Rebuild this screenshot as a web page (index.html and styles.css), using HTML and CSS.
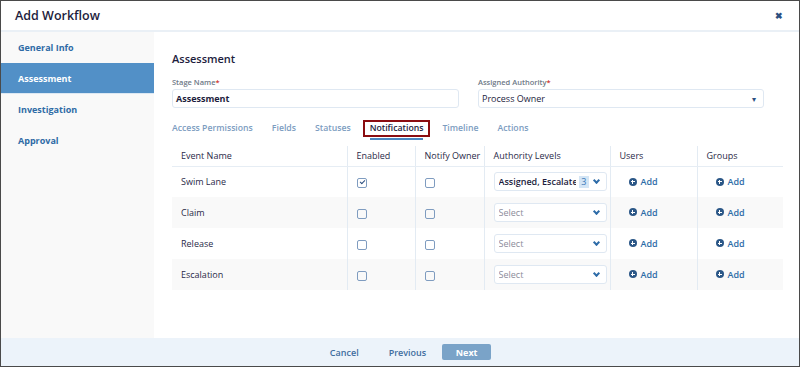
FILE: index.html
```html
<!DOCTYPE html>
<html lang="en">
<head>
    <meta charset="UTF-8">
    <title>Add Workflow</title>
    <link rel="stylesheet" href="styles.css">
</head>
<body>
    <div class="modal">
        <div class="modal-header">
            <div class="modal-title">Add Workflow</div>
            <div class="close">&#10006;</div>
        </div>

        <div class="modal-body">
            <!-- Stage list -->
            <div class="sidebar">
                <div class="side-item">General Info</div>
                <div class="side-item active">Assessment</div>
                <div class="side-item">Investigation</div>
                <div class="side-item">Approval</div>
            </div>

            <div class="main">
                <div class="stage-title">Assessment</div>

                <div class="form-row">
                    <div class="field">
                        <label class="field-label">Stage Name<span class="req">*</span></label>
                        <div class="textbox bold">Assessment</div>
                    </div>
                    <div class="field">
                        <label class="field-label">Assigned Authority<span class="req">*</span></label>
                        <div class="textbox">Process Owner<span class="caret">&#9662;</span></div>
                    </div>
                </div>

                <div class="tabs">
                    <div class="tab">Access Permissions</div>
                    <div class="tab">Fields</div>
                    <div class="tab">Statuses</div>
                    <div class="tab active">Notifications</div>
                    <div class="tab">Timeline</div>
                    <div class="tab">Actions</div>
                </div>

                <table class="grid">
                    <thead>
                        <tr>
                            <th class="c-name">Event Name</th>
                            <th class="c-enabled">Enabled</th>
                            <th class="c-notify">Notify Owner</th>
                            <th class="c-levels">Authority Levels</th>
                            <th class="c-users">Users</th>
                            <th class="c-groups">Groups</th>
                        </tr>
                    </thead>
                    <tbody>
                        <tr>
                            <td>Swim Lane</td>
                            <td><span class="check checked"></span></td>
                            <td><span class="check"></span></td>
                            <td>
                                <div class="select filled">
                                    <span class="select-text">Assigned, Escalated</span>
                                    <span class="count">3</span>
                                    <span class="chev"></span>
                                </div>
                            </td>
                            <td><span class="add"><span class="plus"></span>Add</span></td>
                            <td><span class="add"><span class="plus"></span>Add</span></td>
                        </tr>
                        <tr>
                            <td>Claim</td>
                            <td><span class="check"></span></td>
                            <td><span class="check"></span></td>
                            <td><div class="select"><span class="select-text">Select</span><span class="chev"></span></div></td>
                            <td><span class="add"><span class="plus"></span>Add</span></td>
                            <td><span class="add"><span class="plus"></span>Add</span></td>
                        </tr>
                        <tr>
                            <td>Release</td>
                            <td><span class="check"></span></td>
                            <td><span class="check"></span></td>
                            <td><div class="select"><span class="select-text">Select</span><span class="chev"></span></div></td>
                            <td><span class="add"><span class="plus"></span>Add</span></td>
                            <td><span class="add"><span class="plus"></span>Add</span></td>
                        </tr>
                        <tr>
                            <td>Escalation</td>
                            <td><span class="check"></span></td>
                            <td><span class="check"></span></td>
                            <td><div class="select"><span class="select-text">Select</span><span class="chev"></span></div></td>
                            <td><span class="add"><span class="plus"></span>Add</span></td>
                            <td><span class="add"><span class="plus"></span>Add</span></td>
                        </tr>
                    </tbody>
                </table>
            </div>
        </div>

        <div class="modal-footer">
            <span class="link-button">Cancel</span>
            <span class="link-button">Previous</span>
            <span class="next-button">Next</span>
        </div>
    </div>
</body>
</html>
```

FILE: styles.css
```css
* {
    box-sizing: border-box;
}
body {
    margin: 0;
    font-family: "Open Sans", Arial, sans-serif;
    color: #1d1d3d;
}
.modal {
    width: 800px;
    height: 367px;
    border: 1px solid #4a4a4a;
    display: flex;
    flex-direction: column;
    background-color: #fff;
}
.modal-header {
    height: 31px;
    flex-shrink: 0;
    display: flex;
    align-items: center;
    justify-content: space-between;
    padding: 0 16px 0 14px;
    border-bottom: 2px solid #eaf0f6;
}
.modal-title {
    font-size: 12.5px;
    font-weight: 600;
    color: #1d1d3d;
}
.close {
    font-size: 9px;
    font-weight: bold;
    color: #2c4f80;
}
.modal-body {
    flex: 1;
    display: flex;
    min-height: 0;
}
.sidebar {
    width: 153px;
    flex-shrink: 0;
    background-color: #f9f9f9;
}
.side-item {
    height: 31px;
    display: flex;
    align-items: center;
    padding-left: 17px;
    font-size: 9px;
    font-weight: bold;
    color: #2f6ba6;
}
.side-item.active {
    background-color: #5290c7;
    color: #fff;
    border-bottom: 1px solid #dce8f3;
}
.main {
    flex: 1;
    padding: 18px 16px 0 18px;
}
.stage-title {
    font-size: 11px;
    font-weight: 600;
    color: #1d1d3d;
    line-height: 17px;
}
.form-row {
    display: grid;
    grid-template-columns: 287px 286px;
    column-gap: 19px;
    margin-top: 10px;
}
.field-label {
    display: block;
    font-size: 7.5px;
    font-weight: 600;
    color: #6e7987;
    line-height: 10px;
    margin-bottom: 2px;
}
.req {
    color: #d0342c;
}
.textbox {
    height: 19px;
    border: 1px solid #dfe8f2;
    border-radius: 3px;
    font-size: 9px;
    color: #1d1d3d;
    display: flex;
    align-items: center;
    justify-content: space-between;
    padding: 0 7px 0 3px;
}
.textbox.bold {
    font-weight: bold;
}
.caret {
    font-size: 8px;
    color: #2c4f80;
}
.tabs {
    display: flex;
    margin-top: 10px;
    height: 20px;
    align-items: center;
}
.tab {
    font-size: 8.7px;
    font-weight: 600;
    color: #7c9cbf;
    margin-right: 19px;
    position: relative;
    line-height: 13px;
}
.tab.active {
    color: #1d1d3d;
    outline: 2px solid #8b0c10;
    padding: 0 5px;
    margin: 0 14px 0 -5px;
}
.tab.active::after {
    content: "";
    position: absolute;
    left: 5px;
    right: 5px;
    bottom: -5px;
    height: 2px;
    background-color: #4a86c0;
}
.grid {
    width: 611px;
    border-collapse: collapse;
    margin-top: 8px;
    font-size: 9px;
    color: #2a2a48;
}
.grid th {
    font-weight: normal;
    text-align: left;
    height: 20px;
    padding: 0 0 0 9px;
    border-bottom: 1px solid #e6edf4;
}
.grid td {
    height: 31px;
    padding: 0 0 0 9px;
}
.grid th + th,
.grid td + td {
    border-left: 1px solid #e3ebf3;
}
.grid tbody tr:nth-child(even) td {
    background-color: #f9f9f9;
}
.c-name { width: 175px; }
.c-enabled { width: 68px; }
.c-notify { width: 69px; }
.c-levels { width: 126px; }
.c-users { width: 87px; }
.grid td:nth-child(5),
.grid td:nth-child(6) {
    padding-left: 18px;
}
.check {
    display: inline-block;
    width: 10px;
    height: 10px;
    border: 1px solid #7f9cc0;
    border-radius: 2px;
    vertical-align: middle;
    position: relative;
}
.check.checked::after {
    content: "";
    position: absolute;
    left: 2px;
    top: 1px;
    width: 4px;
    height: 2px;
    border-left: 1px solid #2c4f80;
    border-bottom: 1px solid #2c4f80;
    transform: rotate(-45deg);
}
.select {
    width: 113px;
    height: 19px;
    border: 1px solid #dfe8f2;
    border-radius: 3px;
    display: flex;
    align-items: center;
    padding: 0 4px;
    background-color: #fff;
}
.select-text {
    flex: 1;
    min-width: 0;
    overflow: hidden;
    white-space: nowrap;
    color: #8c8c9a;
    font-size: 9px;
}
.select.filled .select-text {
    color: #1d1d3d;
    font-weight: 600;
}
.count {
    flex-shrink: 0;
    background-color: #d3e5f5;
    color: #3a78b8;
    font-size: 9px;
    padding: 0 2px;
    margin: 0 1px 0 3px;
    line-height: 12px;
}
.chev {
    flex-shrink: 0;
    width: 5px;
    height: 5px;
    border-right: 2px solid #2e6ca8;
    border-bottom: 2px solid #2e6ca8;
    transform: rotate(45deg);
    margin: 0 3px 3px 4px;
}
.add {
    display: inline-flex;
    align-items: center;
    color: #2e6ca8;
    font-weight: 600;
    font-size: 9px;
}
.plus {
    width: 8px;
    height: 8px;
    border-radius: 50%;
    background-color: #2b5787;
    margin-right: 4px;
    position: relative;
}
.plus::before,
.plus::after {
    content: "";
    position: absolute;
    background-color: #fff;
}
.plus::before {
    left: 2px;
    top: 3.5px;
    width: 4px;
    height: 1px;
}
.plus::after {
    left: 3.5px;
    top: 2px;
    width: 1px;
    height: 4px;
}
.modal-footer {
    height: 28px;
    flex-shrink: 0;
    background-color: #ecf3fa;
    display: flex;
    align-items: center;
    justify-content: center;
    padding-left: 21px;
}
.link-button {
    font-size: 9px;
    font-weight: 600;
    color: #3f6d9e;
    margin-right: 30px;
}
.next-button {
    width: 49px;
    height: 16px;
    background-color: #7aa3c8;
    border-radius: 2px;
    color: #fff;
    font-size: 9px;
    font-weight: bold;
    display: flex;
    align-items: center;
    justify-content: center;
    margin-left: -14px;
}
```
